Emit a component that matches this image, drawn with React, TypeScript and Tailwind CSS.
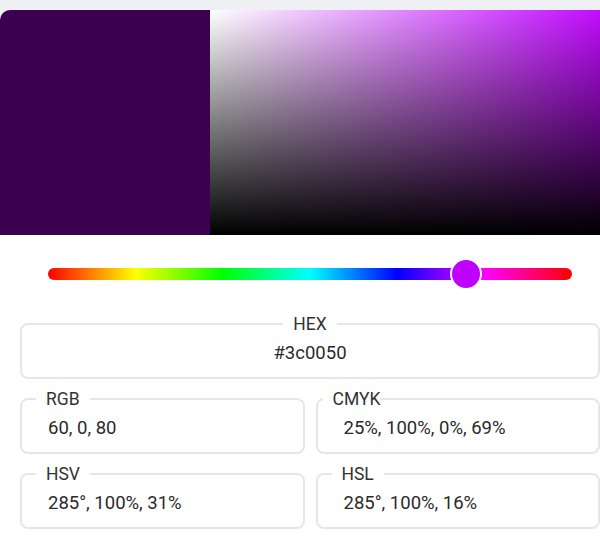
import React from 'react';

const hue = 285;

function Field({
  label,
  value,
  center = false,
  legendClass = 'ml-[14px] px-[10px]',
}: {
  label: string;
  value: string;
  center?: boolean;
  legendClass?: string;
}) {
  return (
    <fieldset className="border-2 border-[#e6e6e6] rounded-lg min-w-0">
      <legend className={`${center ? 'mx-auto px-[10px]' : legendClass} text-[17.5px] leading-5 text-[#333]`}>
        {label}
      </legend>
      <div
        className={`pt-[7px] pb-[12px] text-[18.5px] leading-6 text-[#2a2a2a] ${
          center ? 'text-center' : 'pl-[26px]'
        }`}
      >
        {value}
      </div>
    </fieldset>
  );
}

export default function App() {
  return (
    <div className="w-[600px] h-[558px] overflow-hidden bg-[#eff0f3] pt-[10px] font-['Roboto',sans-serif]">
      <div className="w-[620px] h-full bg-white rounded-t-[10px] overflow-hidden">
        {/* Swatch + saturation/value area */}
        <div className="flex h-[225px]">
          <div className="w-[210px] bg-[#3c0050]" />
          <div className="flex-1 bg-[#bf00ff] bg-[linear-gradient(to_top,#000,rgba(0,0,0,0)),linear-gradient(to_right,#fff,rgba(255,255,255,0))]" />
        </div>

        {/* Hue slider */}
        <div className="relative mx-[48px] mt-[23px] h-8 flex items-center">
          <div className="h-3 w-full rounded-full bg-[linear-gradient(to_right,#f00,#ff0,#0f0,#0ff,#00f,#f0f,#f00)]" />
          <div
            className="absolute top-0 w-8 h-8 -ml-[13px] rounded-full bg-[#bf00ff] border-2 border-white"
            style={{ left: `${(hue / 360) * 100}%` }}
          />
        </div>

        {/* Values */}
        <div className="px-5 mt-[24px] flex flex-col gap-[10px]">
          <Field label="HEX" value="#3c0050" center />
          <div className="grid grid-cols-2 gap-x-[11px] gap-y-[10px]">
            <Field label="RGB" value="60, 0, 80" />
            <Field label="CMYK" value="25%, 100%, 0%, 69%" legendClass="ml-[5px] pl-[10px] pr-0" />
            <Field label="HSV" value="285°, 100%, 31%" />
            <Field label="HSL" value="285°, 100%, 16%" />
          </div>
        </div>
      </div>
    </div>
  );
}
